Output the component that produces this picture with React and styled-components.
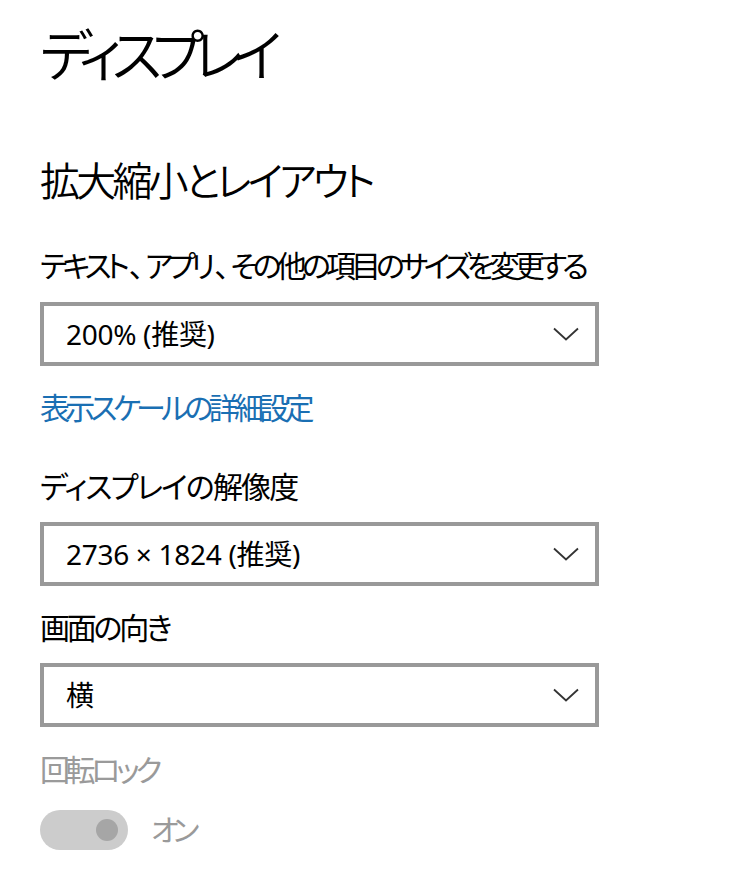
import React from "react";
import styled, { createGlobalStyle } from "styled-components";

const GlobalStyle = createGlobalStyle`
  html, body {
    margin: 0;
    padding: 0;
    background: #ffffff;
  }
  body {
    font-family: "Noto Sans", "Noto Sans CJK JP", sans-serif;
    font-feature-settings: "palt";
    font-weight: 400;
    color: #000000;
  }
`;

const Page = styled.div`
  display: flex;
  flex-direction: column;
  align-items: flex-start;
  padding: 18px 0 20px 40px;
  width: 754px;
  box-sizing: border-box;
`;

const Title = styled.h1`
  margin: 0;
  font-size: 56px;
  line-height: 72px;
  font-weight: 350;
  letter-spacing: -10px;
`;

const SectionTitle = styled.h2`
  margin: 65px 0 0;
  font-size: 40px;
  line-height: 52px;
  font-weight: 350;
  letter-spacing: -3.8px;
`;

const Label = styled.div`
  margin-top: ${(p) => p.$top}px;
  font-size: 30px;
  line-height: 40px;
  letter-spacing: ${(p) => p.$ls}px;
  color: ${(p) => (p.$disabled ? "#9a9a9a" : "#000000")};
`;

const Comma = styled.span`
  margin: 0 6px 0 4px;
`;

const Link = styled.a`
  margin-top: 22px;
  font-size: 30px;
  line-height: 40px;
  letter-spacing: -4.7px;
  color: #1a6fb3;
  text-decoration: none;
  cursor: pointer;
`;

const Select = styled.div`
  margin-top: ${(p) => p.$top}px;
  width: 559px;
  height: 64px;
  box-sizing: border-box;
  border: 4px solid #999999;
  display: flex;
  align-items: center;
  justify-content: space-between;
  padding: 0 16px 0 22px;
  font-size: 28px;
  background: #ffffff;
`;

const SelectText = styled.span`
  line-height: 40px;
  letter-spacing: -0.3px;
`;

const Chevron = styled.svg`
  width: 26px;
  height: 14px;
  flex: none;
`;

const ToggleRow = styled.div`
  margin-top: 20px;
  display: flex;
  align-items: center;
  gap: 23px;
`;

const Track = styled.div`
  width: 88px;
  height: 40px;
  border-radius: 20px;
  background: #cccccc;
  display: flex;
  align-items: center;
  justify-content: flex-end;
  padding-right: 6px;
  box-sizing: border-box;
`;

const Knob = styled.div`
  width: 22px;
  height: 22px;
  border-radius: 50%;
  background: #a6a6a6;
  margin-right: 4px;
`;

const ToggleText = styled.span`
  font-size: 30px;
  line-height: 40px;
  letter-spacing: -6px;
  color: #9a9a9a;
`;

const Dropdown = ({ top, children }) => (
  <Select $top={top}>
    <SelectText>{children}</SelectText>
    <Chevron viewBox="0 0 26 14" fill="none">
      <path d="M1 1.5 L13 12.5 L25 1.5" stroke="#333333" strokeWidth="1.8" />
    </Chevron>
  </Select>
);

export default function App() {
  return (
    <>
      <GlobalStyle />
      <Page>
        <Title>ディスプレイ</Title>
        <SectionTitle>拡大縮小とレイアウト</SectionTitle>
        <Label $top={39} $ls={-4.9}>
          テキスト<Comma>、</Comma>アプリ<Comma>、</Comma>その他の項目のサイズを変更する
        </Label>
        <Dropdown top={16}>200% (推奨)</Dropdown>
        <Link>表示スケールの詳細設定</Link>
        <Label $top={39} $ls={-1.8}>
          ディスプレイの解像度
        </Label>
        <Dropdown top={15}>2736 × 1824 (推奨)</Dropdown>
        <Label $top={22} $ls={-3.2}>
          画面の向き
        </Label>
        <Dropdown top={15}>横</Dropdown>
        <Label $top={23} $ls={-4.4} $disabled>
          回転ロック
        </Label>
        <ToggleRow>
          <Track>
            <Knob />
          </Track>
          <ToggleText>オン</ToggleText>
        </ToggleRow>
      </Page>
    </>
  );
}
